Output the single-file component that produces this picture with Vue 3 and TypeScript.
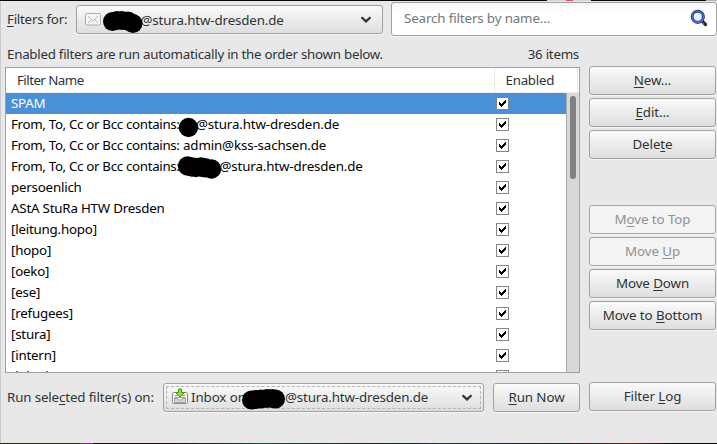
<script setup lang="ts">
import { ref } from 'vue'

interface Filter {
  name: string
  blots?: [number, number][]
  suffix?: string
  lead?: number
}

const domain = '@stura.htw-dresden.de'
const filters: Filter[] = [
  { name: 'SPAM' },
  {
    name: 'From, To, Cc or Bcc contains:',
    lead: 185,
    blots: [[182.5, 13.5]],
    suffix: domain,
  },
  { name: 'From, To, Cc or Bcc contains:', lead: 172, suffix: 'admin@kss-sachsen.de' },
  {
    name: 'From, To, Cc or Bcc contains:',
    lead: 208.5,
    blots: [[181.5, 10], [186, 11], [190, 11.5], [195, 11], [199, 11.8], [205.5, 13]],
    suffix: domain,
  },
  { name: 'persoenlich' },
  { name: 'AStA StuRa HTW Dresden' },
  { name: '[leitung.hopo]' },
  { name: '[hopo]' },
  { name: '[oeko]' },
  { name: '[ese]' },
  { name: '[refugees]' },
  { name: '[stura]' },
  { name: '[intern]' },
  { name: '[lokad]' },
]
const selected = ref(0)
const accountDots = [[35.5, 15.5], [40, 14.5], [45, 14.5], [51, 15], [56, 17.5]]
const folderDots = [[87.5, 16], [92, 15.5], [97, 15], [103, 14.5], [108, 14.5], [111.5, 15]]

// Each label is split round its mnemonic letter.
const editing = [['', 'N', 'ew…'], ['', 'E', 'dit…'], ['Dele', 't', 'e']]
const moving = [
  { text: ['M', 'o', 've to Top'], off: true },
  { text: ['Move ', 'U', 'p'], off: true },
  { text: ['Move ', 'D', 'own'], off: false },
  { text: ['Move to ', 'B', 'ottom'], off: false },
]
</script>

<template>
  <div class="window">
    <header class="top">
      <label class="filters-for"><u>F</u>ilters for:</label>
      <div class="combo account">
        <svg class="mail" width="16" height="13" viewBox="0 0 16 13">
          <rect x=".5" y=".5" width="15" height="11.5" rx="1" fill="#f6f6f5" stroke="#aaa9a5" />
          <path d="M3 3l5 5 5-5M3 10l3-3M13 10l-3-3" fill="none" stroke="#b5b5b1" />
        </svg>
        <span class="address">{{ domain }}</span>
        <svg class="arrow" width="12" height="8" viewBox="0 0 12 8"><path d="M1.5 1.2L6 5.4l4.500-4.200" /></svg>
        <svg class="blot"><circle v-for="(d, i) in accountDots" :key="i" :cx="d[0]" :cy="d[1]" r="9.500" /></svg>
      </div>
      <div class="search">
        <span>Search filters by name…</span>
        <svg width="18" height="18" viewBox="0 0 18 18">
          <path d="M11.500 11.500l4 4" stroke="#302a28" stroke-width="3.200" stroke-linecap="round" />
          <path d="M12.500 13.500l1.500 1.500" stroke="#8a7a68" stroke-width="1" />
          <circle cx="7.800" cy="7.800" r="5.600" fill="#e8eefa" stroke="#24358a" stroke-width="3" />
          <circle cx="7.800" cy="7.800" r="5.600" fill="none" stroke="#5c7fd2" stroke-width="1.100" />
          <path d="M5 8a3 3 0 0 1 3-3" stroke="#fff" stroke-width="1.500" fill="none" />
        </svg>
      </div>
    </header>

    <main class="body">
      <section class="left">
        <div class="info"><span class="hint">Enabled filters are run automatically in the order shown below.</span><span class="count">36 items</span></div>
        <div class="list">
          <div class="head"><span class="col-name">Filter Name</span><span class="col-on">Enabled</span></div>
          <div class="content">
            <div class="rows">
              <div v-for="(f, i) in filters" :key="i" class="row" :class="{ selected: i === selected }" @click="selected = i">
                <span class="name" :class="{ rule: f.lead }" :style="f.lead ? { width: f.lead + 'px' } : undefined">{{ f.name }}</span>
                <span v-if="f.suffix" class="suffix">{{ f.suffix }}</span>
                <svg v-if="f.blots" class="blot"><circle v-for="(d, j) in f.blots" :key="j" :cx="d[0]" :cy="d[1]" r="9.700" /></svg>
                <span class="check">
                  <svg width="13" height="13" viewBox="0 0 13 13" shape-rendering="crispEdges"><path d="M3 5h1v1h1v1h1v-1h1v-1h1v-1h1v-1h1v3h-1v1h-1v1h-1v1h-1v1h-1v-1h-1v-1h-1z" /></svg>
                </span>
              </div>
            </div>
            <div class="track"><div class="thumb"></div></div>
          </div>
        </div>
        <footer class="run">
          <label class="run-label">Run sele<u>c</u>ted filter(s) on:</label>
          <div class="combo folder">
            <i class="focus"></i>
            <svg class="inbox" width="16" height="17" viewBox="0 0 16 17">
              <rect x=".5" y="4.500" width="15" height="11" rx="1" fill="#f8f8f8" stroke="#888a85" />
              <path d="M2.500 10.500h3l1 1.500h3l1-1.500h3v4h-11z" fill="#d3d7cf" stroke="#a4a6a1" />
              <path d="M2.500 7.500h11M2.500 9.500h11" stroke="#9b9d98" />
              <path d="M6.500 1h3v3.500h3L8 9 3.500 4.500h3z" fill="#8ae234" stroke="#4e9a06" />
            </svg>
            <span class="inbox-name">Inbox on</span>
            <span class="address">{{ domain }}</span>
            <svg class="arrow" width="12" height="8" viewBox="0 0 12 8"><path d="M1.5 1.2L6 5.4l4.500-4.200" /></svg>
            <svg class="blot"><circle v-for="(d, i) in folderDots" :key="i" :cx="d[0]" :cy="d[1]" r="9.500" /></svg>
          </div>
          <button class="run-now"><u>R</u>un Now</button>
        </footer>
      </section>

      <aside class="side">
        <div class="group">
          <button v-for="t in editing" :key="t[1]">{{ t[0] }}<u>{{ t[1] }}</u>{{ t[2] }}</button>
        </div>
        <div class="group">
          <button v-for="m in moving" :key="m.text[1]" :disabled="m.off">{{ m.text[0] }}<u>{{ m.text[1] }}</u>{{ m.text[2] }}</button>
        </div>
        <button class="log">Filter <u>L</u>og</button>
      </aside>
    </main>
  </div>
</template>

<style>
body { margin: 0; overflow: hidden; }
</style>

<style scoped>
* { box-sizing: border-box; }
.window {
  width: 717px; height: 444px; padding: 1px 0 1px 1px; color: #2e3436;
  background:
    linear-gradient(90deg, #08050a 547px, #d8d4d2 547px 566px, #e0506a 566px 573px, #d8d4d2 573px 591px, #08050a 591px 706px, #b5b5b5 706px) 0 0 / 100% 1px no-repeat,
    linear-gradient(90deg, #2a2a22 80px, #a010a0 80px 93px, #1a1014 93px 180px, #1a4a40 260px, #18201c 400px, #1a3a44 440px, #14201c 560px, #8a1414 630px, #101010 665px) 0 100% / 100% 1px no-repeat,
    linear-gradient(#c9c9c9, #c9c9c9) 0 0 / 1px 100% no-repeat,
    #e8e8e8;
  font: 13.333px/18px "Noto Sans", sans-serif; white-space: nowrap;
}
u { text-decoration: underline; text-underline-offset: 2px; text-decoration-thickness: 1px; }
.top { display: flex; height: 36px; padding-left: 6px; }
.filters-for { width: 69px; padding-top: 9px; letter-spacing: -.25px; }
.combo, button {
  height: 29px; border: 1px solid #a1a1a1; border-radius: 3px;
  background: linear-gradient(#fafafa, #dedede); box-shadow: 0 1px #f6f6f6;
}
.combo { position: relative; display: flex; align-items: center; }
.account { width: 307px; margin-top: 4px; padding-left: 8px; }
.account .address { margin-left: 39.500px; }
.address, .suffix { letter-spacing: -.14px; }
.arrow { margin-left: auto; }
.arrow path { fill: none; stroke: #2e3436; stroke-width: 2.200; }
.account .arrow { margin-right: 10px; }
.blot { position: absolute; left: 0; top: 0; width: 100%; height: 100%; overflow: visible; pointer-events: none; }
.search {
  display: flex; align-items: center; justify-content: space-between; width: 326px; height: 34px;
  margin: 1px 0 0 8px; padding: 0 8px 2px 12px; border: 1px solid #a1a1a1; border-radius: 3px;
  background: linear-gradient(#f5f5f5, #fff 8px); box-shadow: 0 1px #f6f6f6; color: #747677;
  letter-spacing: -.13px;
}
.body { display: flex; }
.left { width: 575px; margin-left: 4px; }
.info { display: flex; justify-content: space-between; height: 30px; padding: 8px 1px 0 2px; }
.hint { letter-spacing: -.26px; }
.count { letter-spacing: -.25px; }
.list { height: 306px; border: 1px solid #a1a1a1; background: #fff; }
.head { display: flex; height: 25px; line-height: 24px; padding-left: 11px; border-bottom: 1px solid #ececec; }
.col-name { width: 478px; border-right: 1px solid #ececec; letter-spacing: -.5px; }
.head .col-name { letter-spacing: -.55px; }
.col-on { flex: 1; padding-left: 10.500px; margin-right: 1px; border-right: 1px solid #ececec; letter-spacing: -.25px; }
.content { display: flex; height: 279px; overflow: hidden; }
.rows { width: 560px; color: #000; }
.row { position: relative; display: flex; height: 21px; align-items: center; padding-left: 5px; }
.row.selected { background: #4a90d9; color: #fff; }
.name { flex: none; letter-spacing: -.21px; }
.name.rule { letter-spacing: -.33px; }
.name, .suffix { margin-top: -2px; }
.check { margin-left: auto; width: 13px; height: 13px; margin-right: 57px; border: 1px solid #858585; background: #fff; }
.check svg { display: block; margin: -1px; fill: #000; }
.track { width: 13px; padding: 3px 0 0 3px; border-left: 1px solid #a9a9a9; background: #d8d8d8; }
.thumb { width: 6px; height: 83px; border-radius: 3px; background: #7e8180; }
.run { display: flex; padding-top: 10px; }
.run-label { width: 158px; padding: 5px 0 0 2px; letter-spacing: -.14px; }
.folder { width: 321px; padding-left: 8px; }
.folder .inbox-name, .folder .address { margin-top: -1px; }
.focus { position: absolute; inset: 2px; border: 1px dashed #b4b4b4; }
.inbox { flex: none; margin-top: -2px; }
.inbox-name { width: 94px; margin-left: 3px; letter-spacing: -.1px; }
.folder .arrow { margin-right: 10px; }
button { padding: 0; color: inherit; font: inherit; line-height: 27px; letter-spacing: -.08px; }
button:disabled { color: #8e9192; background: #f4f4f4; border-color: #a5a5a5; }
.run-now { width: 87px; margin-left: 9px; }
.side { width: 127px; margin: 29px 0 0 9px; }
.side button { display: block; width: 127px; }
.group { display: flex; flex-direction: column; gap: 3px; margin-bottom: 46px; }
.group + .group { margin-bottom: 52px; }
</style>
